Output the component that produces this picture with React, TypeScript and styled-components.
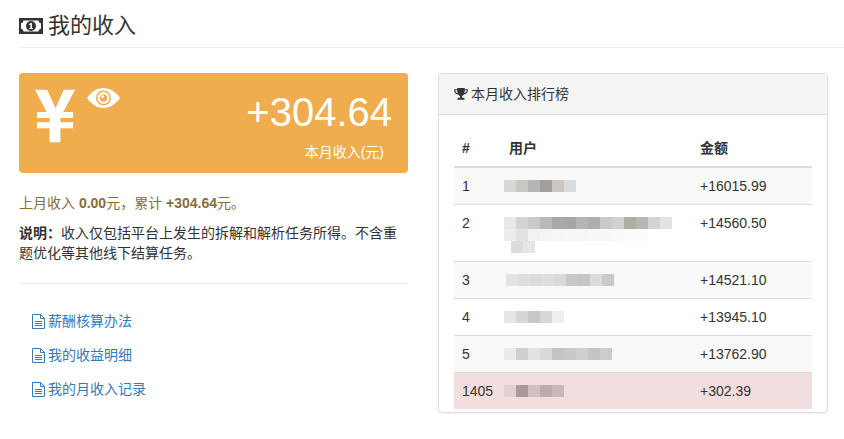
import React from "react";
import styled, { createGlobalStyle } from "styled-components";

const Global = createGlobalStyle`
  html, body { margin: 0; padding: 0; background: #fff; }
  body {
    font-family: "Liberation Sans", "Noto Sans CJK SC", sans-serif;
    font-size: 14px;
    line-height: 20px;
    color: #333;
  }
`;

const Page = styled.div`
  width: 844px;
  height: 439px;
  padding-left: 19px;
  box-sizing: border-box;
  overflow: hidden;
`;

const Header = styled.header`
  height: 48px;
  box-sizing: border-box;
  border-bottom: 1px solid #eee;
  display: flex;
  align-items: center;
  gap: 5px;
  padding-top: 4px;
`;

const Title = styled.h1`
  margin: 0;
  font-size: 22px;
  font-weight: 400;
  line-height: 26px;
  color: #333;
`;

const Columns = styled.div`
  display: flex;
  gap: 30px;
  margin-top: 25px;
  padding-right: 16px;
`;

const Left = styled.section`
  width: 389px;
  flex: none;
`;

const Right = styled.section`
  width: 390px;
  flex: none;
`;

const Income = styled.div`
  height: 100px;
  box-sizing: border-box;
  background: #f0ad4e;
  border-radius: 4px;
  color: #fff;
  display: flex;
  justify-content: space-between;
  padding: 15px 16px 0 16px;
`;

const Symbols = styled.div`
  display: flex;
  align-items: flex-start;
  gap: 11px;
`;

const Amount = styled.div`
  text-align: right;
  padding-top: 2px;
`;

const Value = styled.div`
  font-size: 40px;
  line-height: 44px;
`;

const Unit = styled.div`
  margin-top: 8px;
  padding-right: 8px;
  font-size: 14px;
  line-height: 20px;
`;

const Summary = styled.p`
  margin: 20px 0 0;
  color: #8a6d3b;
`;

const Note = styled.p`
  margin: 10px 0 0;
`;

const Rule = styled.hr`
  border: 0;
  border-top: 1px solid #eee;
  margin: 20px 0 0;
`;

const Links = styled.nav`
  display: flex;
  flex-direction: column;
  gap: 14px;
  margin-top: 27px;
  padding-left: 13px;
`;

const DocLink = styled.a`
  display: flex;
  align-items: center;
  gap: 3px;
  color: #337ab7;
  text-decoration: none;
  height: 20px;
`;

const Panel = styled.div`
  height: 340px;
  box-sizing: border-box;
  border: 1px solid #ddd;
  border-radius: 4px;
  box-shadow: 0 1px 1px rgba(0, 0, 0, 0.05);
`;

const PanelHead = styled.div`
  height: 41px;
  box-sizing: border-box;
  background: #f5f5f5;
  border-bottom: 1px solid #ddd;
  border-radius: 3px 3px 0 0;
  display: flex;
  align-items: center;
  gap: 3px;
  padding: 0 15px;
`;

const PanelBody = styled.div`
  padding: 15px 15px 0;
`;

const Table = styled.table`
  width: 358px;
  border-collapse: collapse;
  border-spacing: 0;
  table-layout: fixed;
`;

const Th = styled.th<{ $w?: number }>`
  width: ${(p) => (p.$w ? `${p.$w}px` : "auto")};
  box-sizing: border-box;
  text-align: left;
  vertical-align: bottom;
  padding: 8px;
  height: 37px;
  border-bottom: 2px solid #ddd;
  font-weight: 700;
`;

const Tr = styled.tr<{ $tone: "odd" | "even" | "danger" }>`
  background: ${(p) =>
    p.$tone === "odd" ? "#f9f9f9" : p.$tone === "danger" ? "#f2dede" : "#fff"};
`;

const Td = styled.td`
  padding: 8px;
  vertical-align: top;
  border-top: 1px solid #ddd;
  line-height: 20px;
`;

const NameCell = styled(Td)`
  padding-left: 0;
`;

const Mosaic = styled.div<{ $top: number; $left: number }>`
  display: flex;
  flex-direction: column;
  margin: ${(p) => p.$top}px 0 0 ${(p) => p.$left}px;
  filter: blur(0.5px);
`;

const MosaicRow = styled.div<{ $indent?: number }>`
  display: flex;
  margin-left: ${(p) => p.$indent ?? 0}px;
`;

const MosaicCell = styled.span<{ $c: string }>`
  width: 12px;
  height: 12px;
  flex: none;
  background: ${(p) => p.$c};
`;

const MoneyIcon = () => (
  <svg width="24" height="16" viewBox="0 0 24 16" aria-hidden="true">
    <path
      fill="#333"
      fillRule="evenodd"
      d="M0 0h24v16H0zM4.5 2.5C4.3 4.2 3.2 5 2 5.2v5.6c1.4.2 2.3 1.2 2.5 2.7h15c.2-1.5 1.100-2.500 2.500-2.700V5.200C20.700 5 19.700 4.200 19.500 2.500z"
    />
    <circle cx="12" cy="8" r="5" fill="#333" />
    <path fill="#fff" d="M11.600 4.900h1.300v5.100h1v1H10.200v-1h1.100V6.500l-1 .6-.5-.9z" />
  </svg>
);

const YenIcon = () => (
  <svg width="41" height="56" viewBox="0 0 42 56" aria-hidden="true">
    <path
      fill="#fff"
      d="M0 1h12.500L21 20 29.500 1H41L29 24h10v6H26v4.500h13v6H26V55H15V40.500H2v-6h13V30H2v-6h10z"
    />
  </svg>
);

const EyeIcon = () => (
  <svg width="33" height="20" viewBox="0 0 33 20" aria-hidden="true">
    <path
      fill="#fff"
      fillRule="evenodd"
      d="M0 10C4 4 10 0 16.500 0S29 4 33 10c-4 6-10 10-16.500 10S4 16 0 10zm16.500-7.500a7.500 7.500 0 1 0 0 15 7.500 7.500 0 0 0 0-15z"
    />
    <path
      fill="#fff"
      fillRule="evenodd"
      d="M16.500 4a6 6 0 1 1 0 12 6 6 0 0 1 0-12zm0 2.200a3.800 3.800 0 0 0-3.800 3.800 3.800 3.800 0 1 0 3.800-3.800z"
    />
    <circle cx="15.500" cy="8.500" r="1.600" fill="#fff" />
  </svg>
);

const TrophyIcon = () => (
  <svg width="14" height="14" viewBox="0 0 14 14" aria-hidden="true">
    <path
      fill="#333"
      fillRule="evenodd"
      d="M3.200 1h7.600v1.200H13.800v1.600c0 1.900-1.700 3.400-4 3.700-.5.700-1.100 1.200-1.800 1.400v1.800h1.300c.8 0 1.300.6 1.300 1.300v.7H3.400v-.7c0-.7.500-1.300 1.300-1.300H6V8.900c-.7-.2-1.300-.7-1.800-1.400-2.300-.3-4-1.800-4-3.700V2.200H3.200zM1.400 3.300v.5c0 1 .9 2 2.300 2.400-.3-.8-.5-1.800-.5-2.900zm11.200 0h-1.800c0 1.100-.2 2.100-.5 2.900 1.400-.4 2.300-1.400 2.300-2.400z"
    />
  </svg>
);

const FileIcon = () => (
  <svg width="13" height="15" viewBox="0 0 13 15" aria-hidden="true" fill="none" stroke="#337ab7">
    <path d="M.5.500h8l4 4v10H.500z" />
    <path d="M8.500.500v4h4M3 7.500h7M3 9.500h7M3 11.500h7" />
  </svg>
);

const grey = ["#dad8d5", "#c9c8c7", "#b7b6b6", "#a09e9e", "#cdc7c4", "#d6dcdf"];

const rows: {
  rank: string;
  value: string;
  tone: "odd" | "even" | "danger";
  top: number;
  left: number;
  mosaic: { indent?: number; cells: string[] }[];
}[] = [
  { rank: "1", value: "+16015.99", tone: "odd", top: 4, left: 3, mosaic: [{ cells: grey }] },
  {
    rank: "2",
    value: "+14560.50",
    tone: "even",
    top: 4,
    left: 3,
    mosaic: [
      {
        cells: ["#e8e8e8", "#d4d4d4", "#cacaca", "#b9b9b9", "#a8a8a8", "#a6a6a6", "#b5b5b5", "#adadad", "#cacaca", "#d2d2d2", "#adada5", "#b8b8ae", "#d4d4d4", "#e2e2e2"],
      },
      {
        cells: ["#ececec", "#e2e2e2", "#f2f2f2", "#f5f5f5", "#f6f6f6", "#f7f7f7", "#f7f7f7", "#f8f8f8", "#f8f8f8", "#f9f9f9", "#fbfbfb", "#fcfcfc"],
      },
      { indent: 7, cells: ["#dcdcdc", "#e6e6e6"] },
    ],
  },
  {
    rank: "3",
    value: "+14521.10",
    tone: "odd",
    top: 4,
    left: 5,
    mosaic: [
      { cells: ["#e4e4e4", "#dedede", "#dcdcdc", "#dedede", "#dadada", "#c8c8c8", "#c6c6c6", "#dcdcdc", "#cacaca"] },
    ],
  },
  {
    rank: "4",
    value: "+13945.10",
    tone: "even",
    top: 4,
    left: 3,
    mosaic: [{ cells: ["#e6e6e6", "#d6d6d6", "#c8c8c8", "#d8d8d8", "#efefef"] }],
  },
  {
    rank: "5",
    value: "+13762.90",
    tone: "odd",
    top: 4,
    left: 3,
    mosaic: [
      { cells: ["#ebebeb", "#cfcfcf", "#e2e2e2", "#d9d9d9", "#c4c4c4", "#c9c9c9", "#cfcfcf", "#c4c4c4", "#cccccc"] },
    ],
  },
  {
    rank: "1405",
    value: "+302.39",
    tone: "danger",
    top: 4,
    left: 3,
    mosaic: [{ cells: ["#e2cfcf", "#ad9899", "#d3bfc0", "#bfaaab", "#cdb8b9"] }],
  },
];

export default function App() {
  return (
    <Page>
      <Global />
      <Header>
        <MoneyIcon />
        <Title>我的收入</Title>
      </Header>
      <Columns>
        <Left>
          <Income>
            <Symbols>
              <YenIcon />
              <EyeIcon />
            </Symbols>
            <Amount>
              <Value>+304.64</Value>
              <Unit>本月收入(元)</Unit>
            </Amount>
          </Income>
          <Summary>
            上月收入 <b>0.00</b>元，累计 <b>+304.64</b>元。
          </Summary>
          <Note>
            <b>说明：</b>收入仅包括平台上发生的拆解和解析任务所得。不含重题优化等其他线下结算任务。
          </Note>
          <Rule />
          <Links>
            <DocLink href="#"><FileIcon />薪酬核算办法</DocLink>
            <DocLink href="#"><FileIcon />我的收益明细</DocLink>
            <DocLink href="#"><FileIcon />我的月收入记录</DocLink>
          </Links>
        </Left>
        <Right>
          <Panel>
            <PanelHead>
              <TrophyIcon />
              本月收入排行榜
            </PanelHead>
            <PanelBody>
              <Table>
                <thead>
                  <tr>
                    <Th $w={47}>#</Th>
                    <Th $w={191}>用户</Th>
                    <Th>金额</Th>
                  </tr>
                </thead>
                <tbody>
                  {rows.map((r) => (
                    <Tr key={r.rank} $tone={r.tone}>
                      <Td>{r.rank}</Td>
                      <NameCell>
                        <Mosaic $top={r.top} $left={r.left}>
                          {r.mosaic.map((m, i) => (
                            <MosaicRow key={i} $indent={m.indent}>
                              {m.cells.map((c, j) => (
                                <MosaicCell key={j} $c={c} />
                              ))}
                            </MosaicRow>
                          ))}
                        </Mosaic>
                      </NameCell>
                      <Td>{r.value}</Td>
                    </Tr>
                  ))}
                </tbody>
              </Table>
            </PanelBody>
          </Panel>
        </Right>
      </Columns>
    </Page>
  );
}
